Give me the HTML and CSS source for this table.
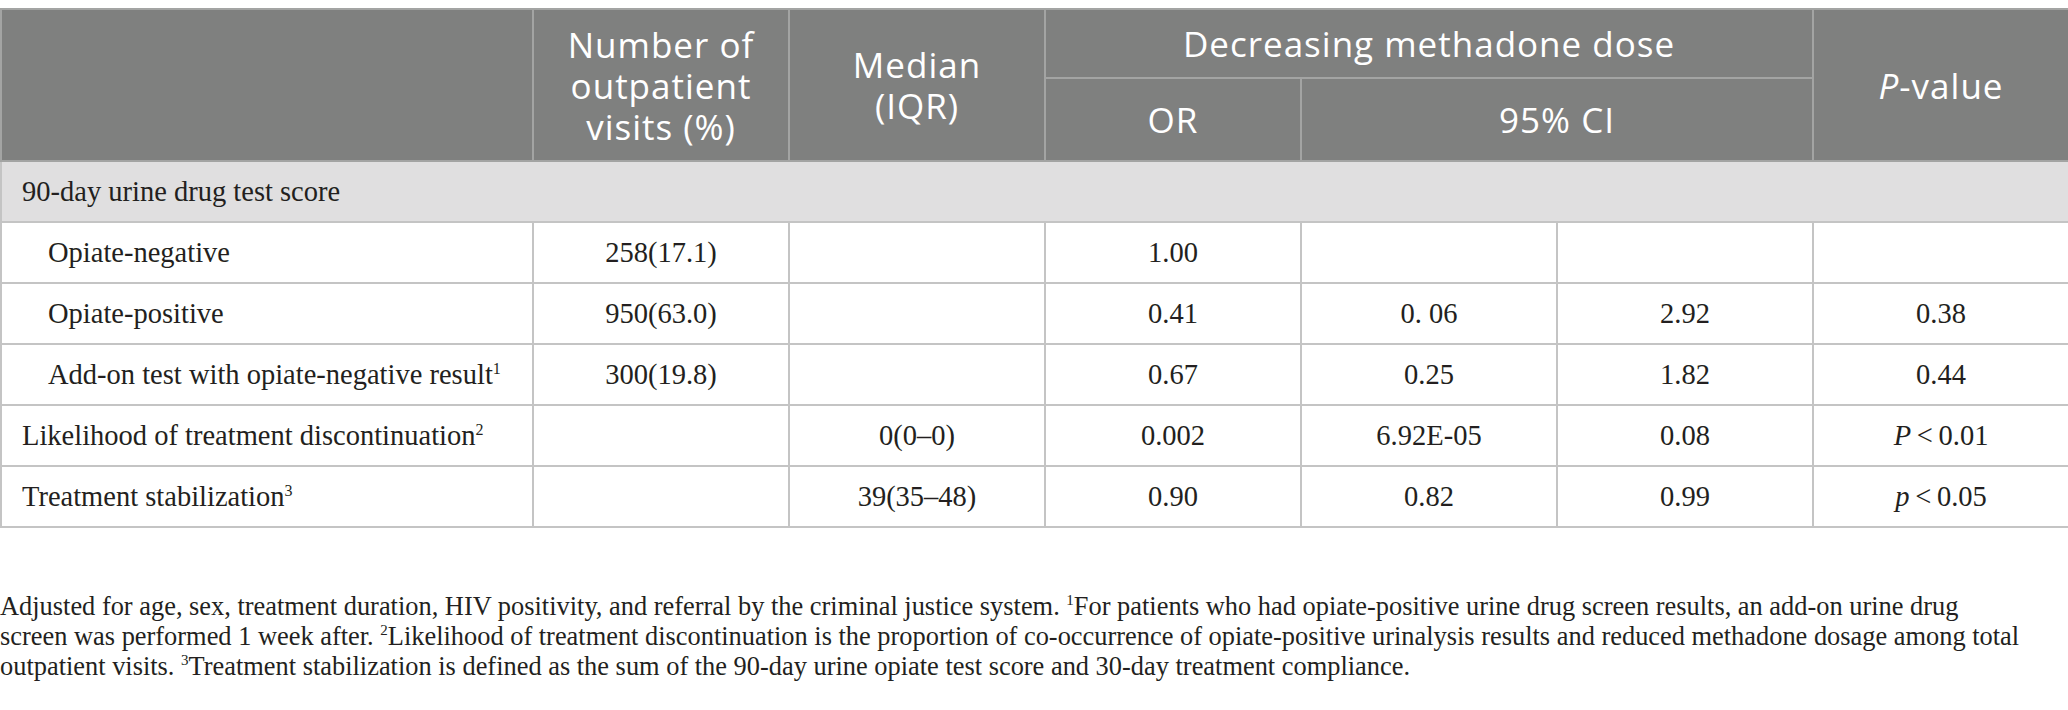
FILE: index.html
```html
<!DOCTYPE html>
<html lang="en">
<head>
  <meta charset="UTF-8">
  <meta name="viewport" content="width=device-width, initial-scale=1.0">
  <title>Methadone dose and urine drug test outcomes</title>
  <link rel="stylesheet" href="styles.css">
</head>
<body>

  <table class="results">
    <colgroup>
      <col class="col-label">
      <col class="col-data">
      <col class="col-data">
      <col class="col-data">
      <col class="col-data">
      <col class="col-data">
      <col class="col-data">
    </colgroup>
    <thead>
      <tr class="head-top">
        <th rowspan="2"></th>
        <th rowspan="2">Number of<br>outpatient<br>visits (%)</th>
        <th rowspan="2">Median<br>(IQR)</th>
        <th colspan="3">Decreasing methadone dose</th>
        <th rowspan="2"><i>P</i>-value</th>
      </tr>
      <tr class="head-sub">
        <th>OR</th>
        <th colspan="2">95% CI</th>
      </tr>
    </thead>
    <tbody>
      <tr class="section">
        <td colspan="7">90-day urine drug test score</td>
      </tr>
      <tr>
        <td class="label sub">Opiate-negative</td>
        <td>258(17.1)</td>
        <td></td>
        <td>1.00</td>
        <td></td>
        <td></td>
        <td></td>
      </tr>
      <tr>
        <td class="label sub">Opiate-positive</td>
        <td>950(63.0)</td>
        <td></td>
        <td>0.41</td>
        <td>0. 06</td>
        <td>2.92</td>
        <td>0.38</td>
      </tr>
      <tr>
        <td class="label sub">Add-on test with opiate-negative result<sup>1</sup></td>
        <td>300(19.8)</td>
        <td></td>
        <td>0.67</td>
        <td>0.25</td>
        <td>1.82</td>
        <td>0.44</td>
      </tr>
      <tr>
        <td class="label">Likelihood of treatment discontinuation<sup>2</sup></td>
        <td></td>
        <td>0(0&#8211;0)</td>
        <td>0.002</td>
        <td>6.92E-05</td>
        <td>0.08</td>
        <td><i>P</i>&#8201;&lt;&#8201;0.01</td>
      </tr>
      <tr>
        <td class="label">Treatment stabilization<sup>3</sup></td>
        <td></td>
        <td>39(35&#8211;48)</td>
        <td>0.90</td>
        <td>0.82</td>
        <td>0.99</td>
        <td><i>p</i>&#8201;&lt;&#8201;0.05</td>
      </tr>
    </tbody>
  </table>

  <p class="footnote">Adjusted for age, sex, treatment duration, HIV positivity, and referral by the criminal justice system. <sup>1</sup>For patients who had opiate-positive urine drug screen results, an add-on urine drug screen was performed 1 week after. <sup>2</sup>Likelihood of treatment discontinuation is the proportion of co-occurrence of opiate-positive urinalysis results and reduced methadone dosage among total outpatient visits. <sup>3</sup>Treatment stabilization is defined as the sum of the 90-day urine opiate test score and 30-day treatment compliance.</p>

</body>
</html>
```

FILE: styles.css
```css
body {
  margin: 0;
  padding: 8px 0 0;
  background-color: #fff;
  color: #231f20;
  font-family: "Liberation Serif", "Times New Roman", serif;
}
.results {
  width: 2068px;
  table-layout: fixed;
  border-collapse: collapse;
}
.col-label {
  width: 532px;
}
.col-data {
  width: 256px;
}
.results th {
  background-color: #7f807f;
  color: #fff;
  border: 2px solid #a3a4a3;
  font-family: "Open Sans", "DejaVu Sans", sans-serif;
  font-weight: 400;
  font-size: 35px;
  letter-spacing: 1px;
  line-height: 41px;
  padding: 0 6px;
  text-align: center;
}
.head-top th {
  height: 67px;
}
.head-sub th {
  height: 81px;
}
.results td {
  border: 2px solid #c4c4c4;
  height: 59px;
  padding: 0 20px;
  font-size: 28.5px;
  text-align: center;
  vertical-align: middle;
}
.results td.label {
  text-align: left;
}
.results td.sub {
  padding-left: 46px;
}
.section td {
  background-color: #e0dfe0;
  text-align: left;
}
.results sup {
  font-size: 16px;
  line-height: 0;
}
.footnote {
  max-width: 2024px;
  margin: 63px 0 0;
  font-size: 26.4px;
  line-height: 30px;
}
.footnote sup {
  font-size: 15px;
  line-height: 0;
}
```
